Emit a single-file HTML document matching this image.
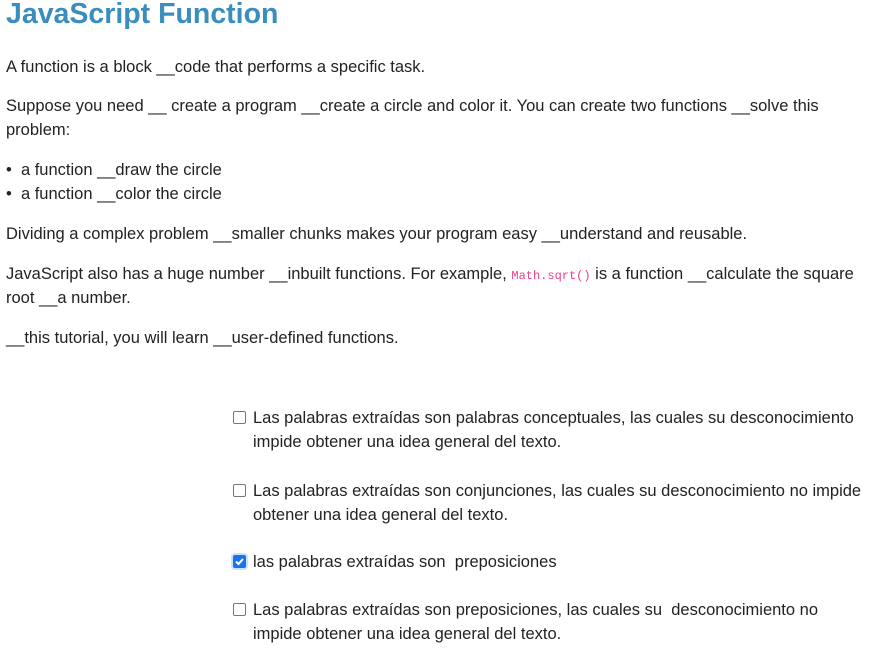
<!DOCTYPE html>
<html><head><meta charset="utf-8"><style>
body{margin:0;width:879px;height:654px;background:#fff;font-family:"Liberation Sans",sans-serif;color:#222;font-size:16.5px;position:relative;overflow:hidden}
.l{position:absolute;left:6px;white-space:nowrap;line-height:24px}
h1{position:absolute;left:6px;top:-4px;margin:0;font-size:28.5px;color:#3a8dbf;font-weight:bold;line-height:36px}
code{font-family:"Liberation Mono",monospace;font-size:12px;color:#e83e8c}
.cb{position:absolute;left:233px;width:11px;height:11px;border:1.5px solid #767680;border-radius:2px;background:#fff}
.cb.on{background:#1a73e8;border-color:#1a73e8;box-shadow:0 0 0 2px #cde2f8}
.t{position:absolute;left:253px;white-space:nowrap;line-height:24px}
</style></head><body>
<h1>JavaScript Function</h1>
<div class="l" style="top:55px">A function is a block __code that performs a specific task.</div>
<div class="l" style="top:94px">Suppose you need __ create a program __create a circle and color it. You can create two functions __solve this</div>
<div class="l" style="top:118px">problem:</div>
<div class="l" style="top:158px">•&nbsp; a function __draw the circle</div>
<div class="l" style="top:182px">•&nbsp; a function __color the circle</div>
<div class="l" style="top:222px">Dividing a complex problem __smaller chunks makes your program easy __understand and reusable.</div>
<div class="l" style="top:262px">JavaScript also has a huge number __inbuilt functions. For example, <code>Math.sqrt()</code> is a function __calculate the square</div>
<div class="l" style="top:286px">root __a number.</div>
<div class="l" style="top:326px">__this tutorial, you will learn __user-defined functions.</div>

<div class="cb" style="top:411px"></div>
<div class="t" style="top:406px">Las palabras extraídas son palabras conceptuales, las cuales su desconocimiento</div>
<div class="t" style="top:430px">impide obtener una idea general del texto.</div>
<div class="cb" style="top:484px"></div>
<div class="t" style="top:479px">Las palabras extraídas son conjunciones, las cuales su desconocimiento no impide</div>
<div class="t" style="top:503px">obtener una idea general del texto.</div>
<div class="cb on" style="top:555px"><svg width="11" height="11" viewBox="0 0 11 11" style="position:absolute;left:0;top:0"><path d="M2 5.5L4.5 8L9 3" stroke="#fff" stroke-width="2" fill="none"/></svg></div>
<div class="t" style="top:550px">las palabras extraídas son&nbsp; preposiciones</div>
<div class="cb" style="top:603px"></div>
<div class="t" style="top:598px">Las palabras extraídas son preposiciones, las cuales su&nbsp; desconocimiento no</div>
<div class="t" style="top:622px">impide obtener una idea general del texto.</div>
</body></html>
